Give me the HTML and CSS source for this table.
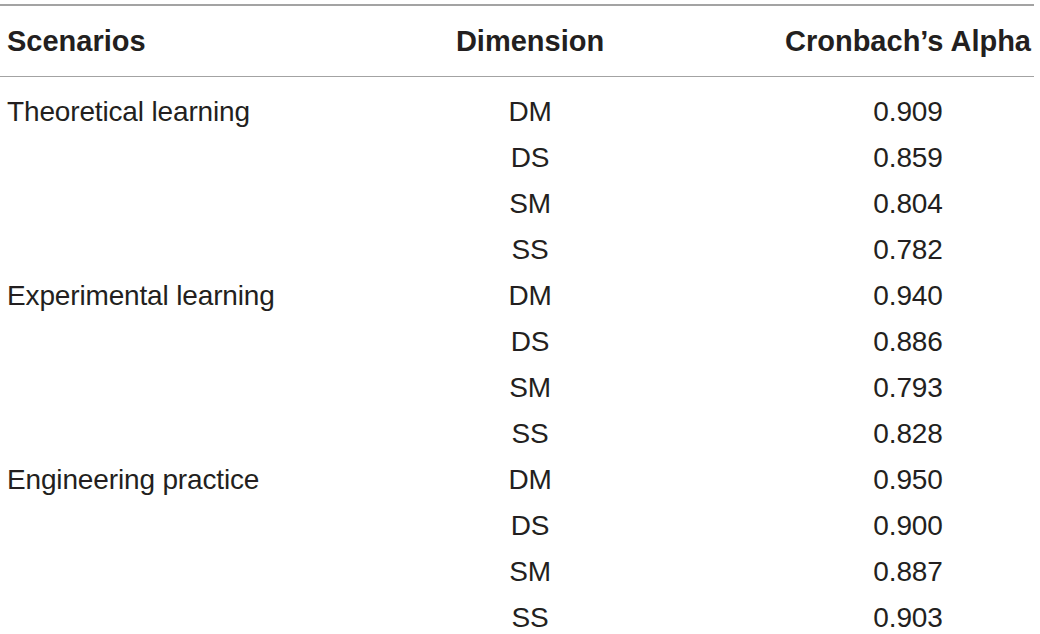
FILE: index.html
```html
<!DOCTYPE html>
<html lang="en">
<head>
<meta charset="utf-8">
<title>Cronbach's Alpha</title>
<link rel="stylesheet" href="styles.css">
</head>
<body>
<div class="table">
  <div class="row head">
    <div class="c1">Scenarios</div>
    <div class="c2">Dimension</div>
    <div class="c3">Cronbach’s Alpha</div>
  </div>
  <div class="body">
    <div class="row"><div class="c1">Theoretical learning</div><div class="c2">DM</div><div class="c3">0.909</div></div>
    <div class="row"><div class="c1"></div><div class="c2">DS</div><div class="c3">0.859</div></div>
    <div class="row"><div class="c1"></div><div class="c2">SM</div><div class="c3">0.804</div></div>
    <div class="row"><div class="c1"></div><div class="c2">SS</div><div class="c3">0.782</div></div>
    <div class="row"><div class="c1">Experimental learning</div><div class="c2">DM</div><div class="c3">0.940</div></div>
    <div class="row"><div class="c1"></div><div class="c2">DS</div><div class="c3">0.886</div></div>
    <div class="row"><div class="c1"></div><div class="c2">SM</div><div class="c3">0.793</div></div>
    <div class="row"><div class="c1"></div><div class="c2">SS</div><div class="c3">0.828</div></div>
    <div class="row"><div class="c1">Engineering practice</div><div class="c2">DM</div><div class="c3">0.950</div></div>
    <div class="row"><div class="c1"></div><div class="c2">DS</div><div class="c3">0.900</div></div>
    <div class="row"><div class="c1"></div><div class="c2">SM</div><div class="c3">0.887</div></div>
    <div class="row"><div class="c1"></div><div class="c2">SS</div><div class="c3">0.903</div></div>
  </div>
</div>
</body>
</html>
```

FILE: styles.css
```css
html, body {
  margin: 0;
  padding: 0;
  background: #ffffff;
}
body {
  font-family: "Liberation Sans", Arial, Helvetica, sans-serif;
  color: #231f20;
  font-size: 28px;
  overflow: hidden;
}
.table {
  width: 1034px;
  padding-top: 4px;
}
.row {
  display: grid;
  grid-template-columns: 320px 420px 294px;
  height: 46px;
  line-height: 46px;
  white-space: nowrap;
  letter-spacing: -0.15px;
}
.head {
  height: 70px;
  line-height: 70px;
  font-size: 29px;
  font-weight: bold;
  letter-spacing: 0;
  border-top: 2px solid #a3a3a3;
  border-bottom: 1px solid #a3a3a3;
}
.body {
  padding-top: 12px;
}
.c1 {
  padding-left: 7px;
}
.c2 {
  text-align: center;
}
.c3 {
  text-align: center;
  padding-left: 42px;
}
```
